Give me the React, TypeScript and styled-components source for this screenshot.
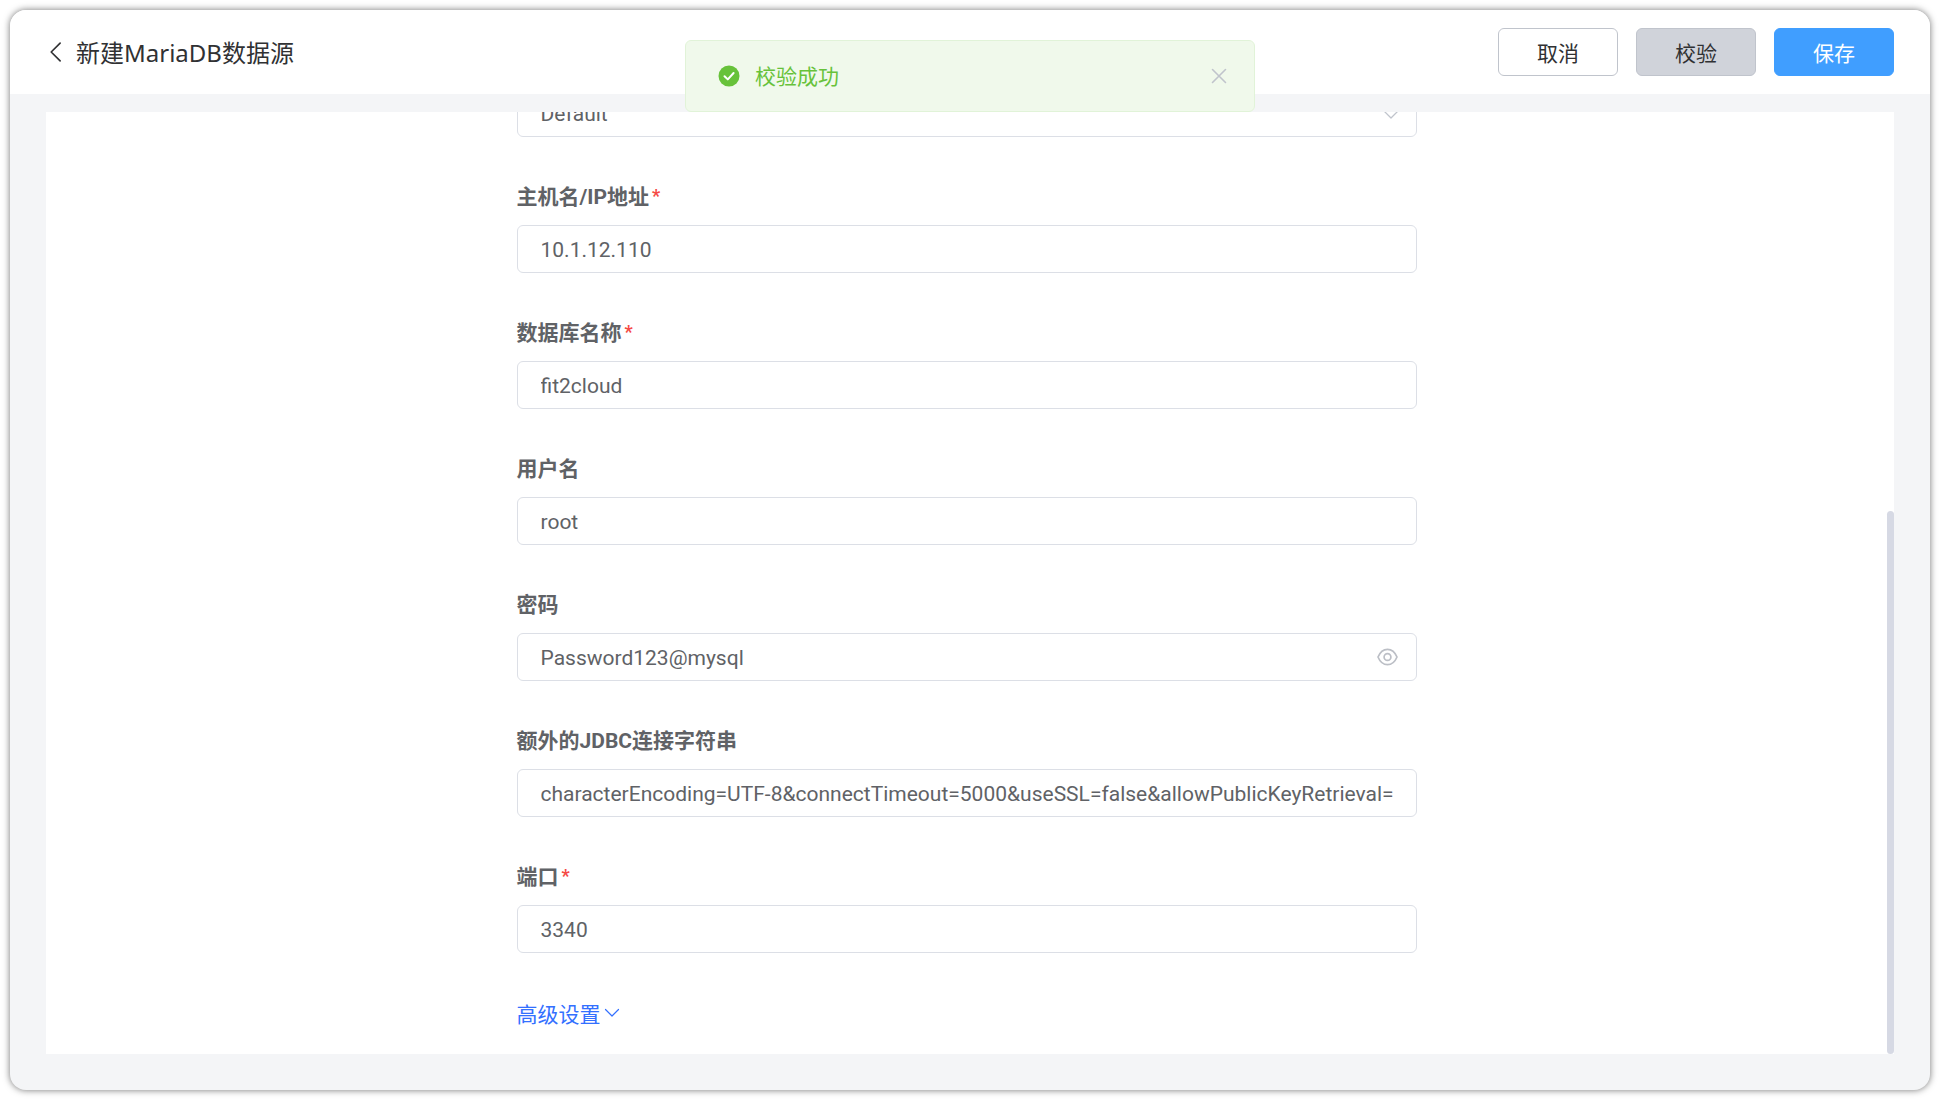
import React from "react";
import styled, { createGlobalStyle } from "styled-components";

const FONT = `Roboto, "Noto Sans CJK SC", sans-serif`;

const Global = createGlobalStyle`
  html, body { margin: 0; padding: 0; background: #ffffff; }
  * { box-sizing: border-box; }
  body { font-family: ${FONT}; }
`;

const Page = styled.div`
  width: 1940px;
  height: 1100px;
  padding: 10px;
  background: #fff;
`;

const Frame = styled.div`
  position: relative;
  height: 100%;
  display: flex;
  flex-direction: column;
  border-radius: 16px;
  background: #f4f5f7;
  overflow: hidden;
  box-shadow: 0 0 7px rgba(0, 0, 0, 0.55);
`;

const Header = styled.header`
  flex: 0 0 84px;
  display: flex;
  align-items: center;
  justify-content: space-between;
  padding: 0 36px 0 35px;
  background: #fff;
`;

const TitleGroup = styled.div`
  display: flex;
  align-items: center;
  gap: 9px;
  color: #303133;
`;

const Title = styled.h1`
  margin: 2px 0 0;
  font-family: "Noto Sans", "Noto Sans CJK SC", sans-serif;
  font-size: 24px;
  font-weight: 400;
  line-height: 32px;
  color: #303133;
`;

const Actions = styled.div`
  display: flex;
  gap: 18px;
`;

const variants = {
  plain: "background:#fff;border:1.5px solid #c0c4cc;color:#303133;",
  muted: "background:#d0d3da;border:1.5px solid #c0c4cc;color:#303133;",
  primary: "background:#409eff;border:1.5px solid #409eff;color:#fff;",
};

const Button = styled.button<{ $variant: keyof typeof variants }>`
  width: 120px;
  height: 48px;
  padding: 0;
  border-radius: 6px;
  font-family: ${FONT};
  font-size: 21px;
  ${(p) => variants[p.$variant]}
`;

const Main = styled.main`
  flex: 1;
  min-height: 0;
  padding: 18px 36px 36px;
  display: flex;
`;

const Panel = styled.section`
  flex: 1;
  display: flex;
  background: #fff;
  overflow: hidden;
`;

const ScrollArea = styled.div`
  flex: 1;
  overflow: hidden;
  display: flex;
  justify-content: center;
`;

const Form = styled.form`
  width: 900px;
  margin-top: -23px;
  display: flex;
  flex-direction: column;
  gap: 45px;
`;

const Field = styled.div`
  display: flex;
  flex-direction: column;
  gap: 17px;
`;

const Label = styled.label`
  display: flex;
  height: 26px;
  align-items: center;
  gap: 3px;
  font-size: 21px;
  font-weight: 700;
  color: #606266;
`;

const Star = styled.span`
  color: #f54a45;
  font-size: 18px;
  font-weight: 700;
`;

const InputWrap = styled.div`
  position: relative;
  height: 48px;
`;

const Input = styled.input`
  display: block;
  width: 100%;
  height: 100%;
  padding: 1px 23px 0;
  border: 1.5px solid #dcdfe6;
  border-radius: 6px;
  outline: none;
  background: #fff;
  color: #606266;
  font-family: ${FONT};
  font-size: 21px;
`;

const Adornment = styled.span`
  position: absolute;
  right: 19px;
  top: 50%;
  transform: translateY(-50%);
  display: flex;
  color: #bcbfc6;
`;

const SelectArrow = styled(Adornment)`
  right: 18px;
  top: calc(50% + 2px);
  color: #c0c4cc;
`;

const MoreLink = styled.a`
  display: flex;
  align-items: center;
  gap: 3px;
  margin-top: -1px;
  height: 32px;
  font-size: 21px;
  color: #3370ff;
`;

const Track = styled.div`
  flex: 0 0 7px;
  display: flex;
  flex-direction: column;
  justify-content: flex-end;
`;

const Thumb = styled.div`
  height: 543px;
  background: #d6d9e4;
  border-radius: 4px;
`;

const Message = styled.div`
  position: absolute;
  top: 30px;
  left: 50%;
  transform: translateX(-50%);
  width: 570px;
  height: 72px;
  display: flex;
  align-items: center;
  padding: 0 27px 0 32px;
  background: #f0f9eb;
  border: 1.5px solid #e1f3d8;
  border-radius: 6px;
  color: #67c23a;
  font-size: 21px;
`;

const MessageText = styled.span`
  flex: 1;
  margin: -3px 0 0 15px;
`;

const CloseIcon = styled.svg`
  display: block;
  color: #c0c4cc;
`;

const Chevron = ({ dir, size, w = 1.5 }: { dir: "left" | "down"; size: number; w?: number }) => (
  <svg width={size} height={size} viewBox="0 0 16 16" fill="none" stroke="currentColor" strokeWidth={w} strokeLinecap="round" strokeLinejoin="round">
    <path d={dir === "left" ? "M11 1.5 4.5 8l6.5 6.5" : "M1.5 4.5 8 11l6.5-6.5"} />
  </svg>
);

const Eye = () => (
  <svg width="21" height="21" viewBox="0 0 21 21" fill="none" stroke="currentColor" strokeWidth="1.7">
    <path d="M1 10.5C3.2 5.2 6.5 2.8 10.5 2.8s7.3 2.4 9.5 7.7c-2.2 5.3-5.5 7.7-9.5 7.7S3.2 15.8 1 10.5Z" />
    <circle cx="10.5" cy="10.5" r="3.4" />
  </svg>
);

const SuccessIcon = () => (
  <svg width="22" height="22" viewBox="0 0 22 22">
    <circle cx="11" cy="11" r="10.5" fill="#67c23a" />
    <path d="M6.5 11.2 9.8 14.4 15.6 8" fill="none" stroke="#fff" strokeWidth="2" strokeLinecap="round" strokeLinejoin="round" />
  </svg>
);

const fields = [
  { label: "主机名/IP地址", value: "10.1.12.110", required: true },
  { label: "数据库名称", value: "fit2cloud", required: true },
  { label: "用户名", value: "root" },
  { label: "密码", value: "Password123@mysql", eye: true },
  { label: "额外的JDBC连接字符串", value: "characterEncoding=UTF-8&connectTimeout=5000&useSSL=false&allowPublicKeyRetrieval=true" },
  { label: "端口", value: "3340", required: true },
];

export default function App() {
  return (
    <Page>
      <Global />
      <Frame>
        <Header>
          <TitleGroup>
            <Chevron dir="left" size={22} w={1.2} />
            <Title>新建MariaDB数据源</Title>
          </TitleGroup>
          <Actions>
            <Button $variant="plain">取消</Button>
            <Button $variant="muted">校验</Button>
            <Button $variant="primary">保存</Button>
          </Actions>
        </Header>
        <Main>
          <Panel>
            <ScrollArea>
              <Form>
                <InputWrap>
                  <Input readOnly value="Default" />
                  <SelectArrow>
                    <Chevron dir="down" size={16} w={1.3} />
                  </SelectArrow>
                </InputWrap>
                {fields.map((f) => (
                  <Field key={f.label}>
                    <Label>
                      {f.label}
                      {f.required && <Star>*</Star>}
                    </Label>
                    <InputWrap>
                      <Input readOnly value={f.value} />
                      {f.eye && (
                        <Adornment>
                          <Eye />
                        </Adornment>
                      )}
                    </InputWrap>
                  </Field>
                ))}
                <MoreLink>
                  高级设置
                  <Chevron dir="down" size={16} w={1.2} />
                </MoreLink>
              </Form>
            </ScrollArea>
            <Track>
              <Thumb />
            </Track>
          </Panel>
        </Main>
        <Message>
          <SuccessIcon />
          <MessageText>校验成功</MessageText>
          <CloseIcon width="16" height="16" viewBox="0 0 16 16" fill="none" stroke="currentColor" strokeWidth="1.6" strokeLinecap="round">
            <path d="M1.5 1.5 14.5 14.5M14.5 1.5 1.5 14.5" />
          </CloseIcon>
        </Message>
      </Frame>
    </Page>
  );
}
